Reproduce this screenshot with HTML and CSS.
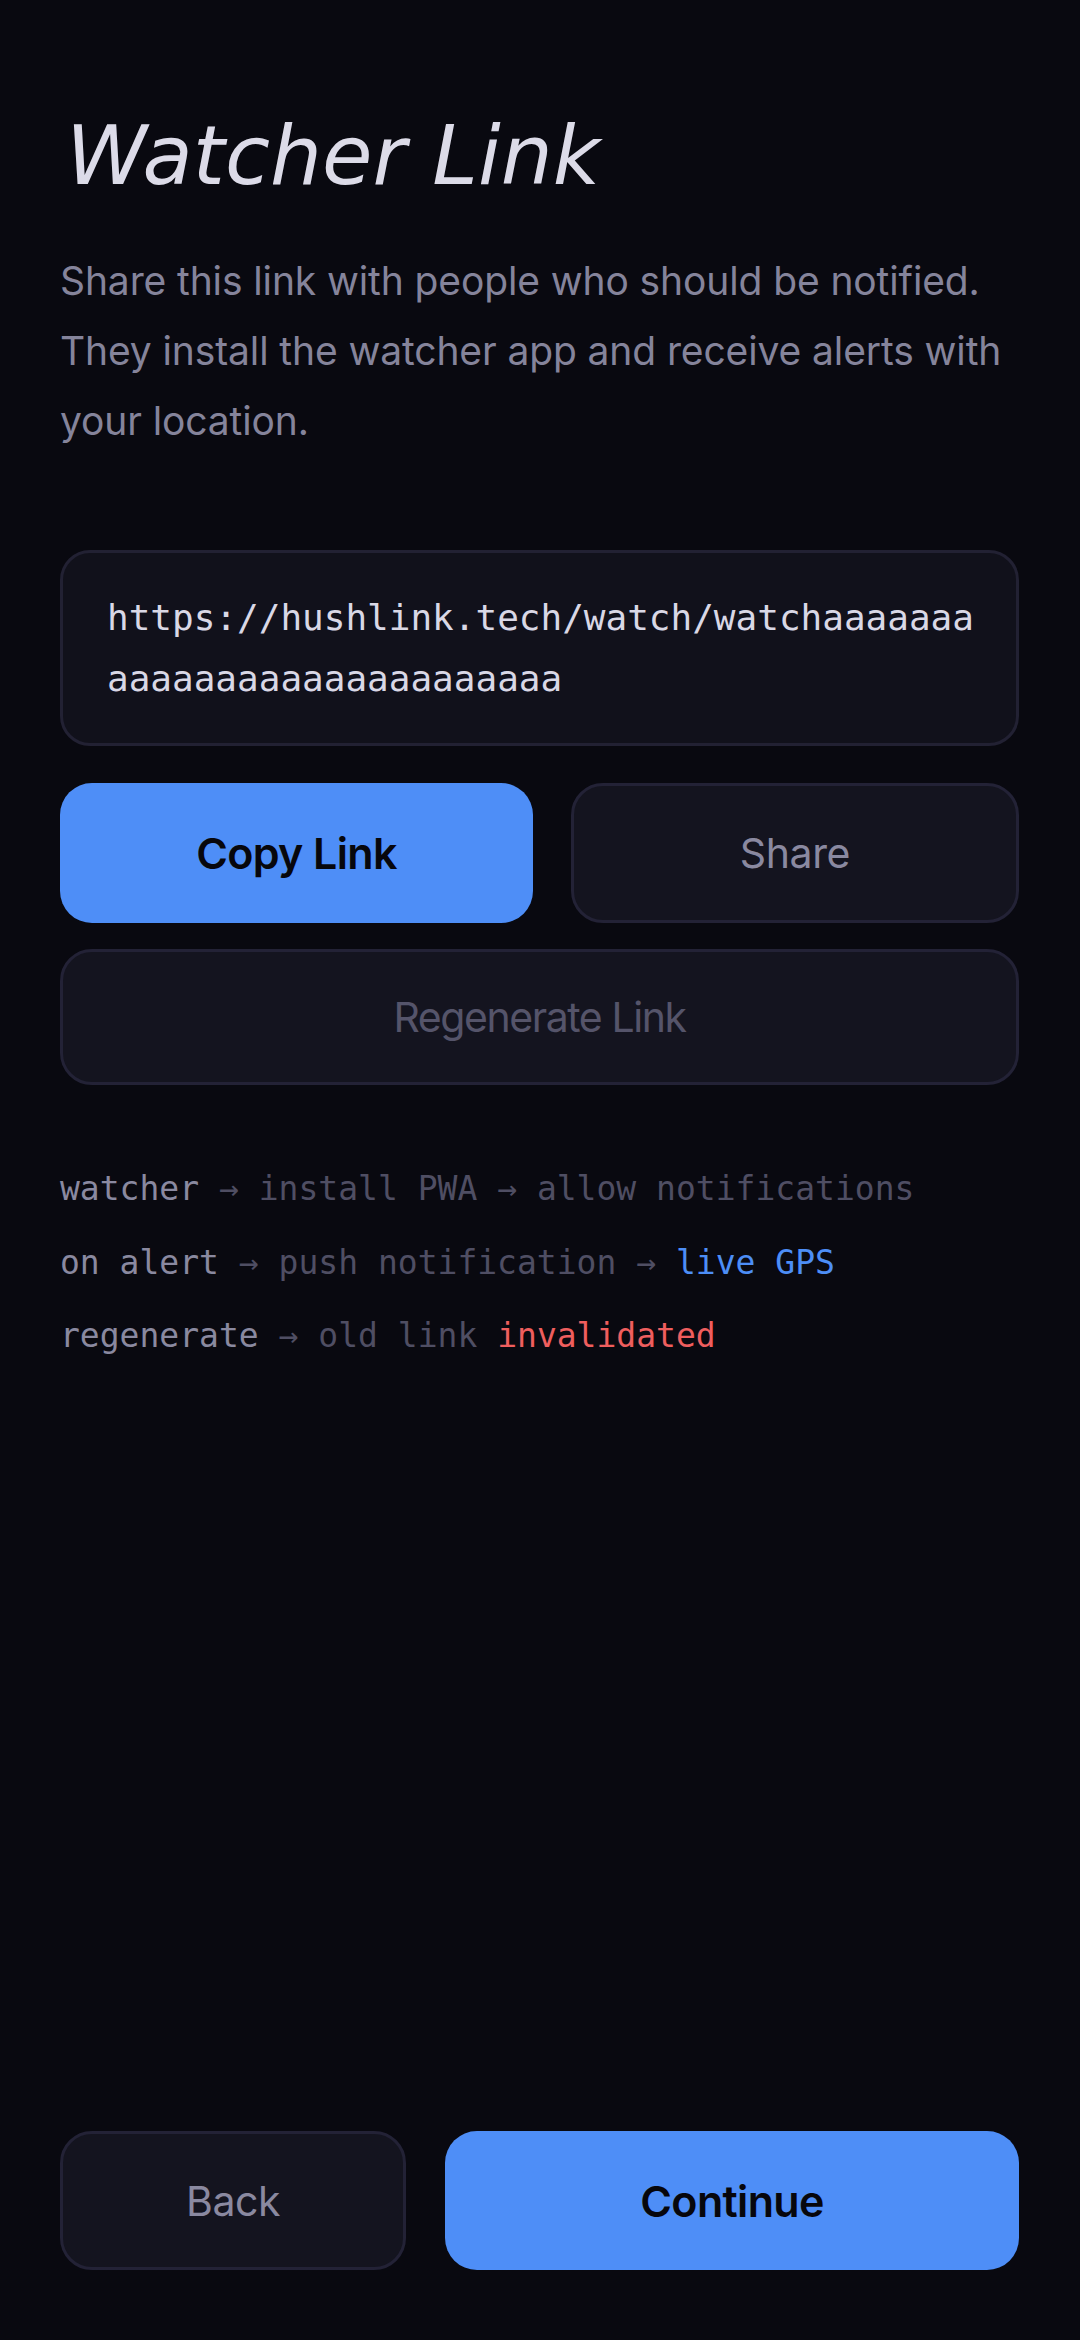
FILE: index.html
```html
<!DOCTYPE html>
<html lang="en">
<head>
<meta charset="utf-8">
<title>Watcher Link</title>
<link rel="stylesheet" href="styles.css">
</head>
<body>
<main class="screen">
  <h1 class="title">Watcher Link</h1>
  <p class="desc">Share this link with people who should be notified. They install the watcher app and receive alerts with your location.</p>

  <div class="linkbox">https://hushlink.tech/watch/watchaaaaaaaaaaaaaaaaaaaaaaaaaaaa</div>

  <div class="actions">
    <button class="btn btn-primary btn-copy">Copy Link</button>
    <button class="btn btn-secondary btn-share">Share</button>
  </div>
  <button class="btn btn-secondary btn-regen">Regenerate Link</button>

  <div class="flow">
    <div class="flow-line"><span class="k">watcher</span> <span class="arr">→</span> <span class="d">install PWA</span> <span class="arr">→</span> <span class="d">allow notifications</span></div>
    <div class="flow-line"><span class="k">on alert</span> <span class="arr">→</span> <span class="d">push notification</span> <span class="arr">→</span> <span class="blue">live GPS</span></div>
    <div class="flow-line"><span class="k">regenerate</span> <span class="arr">→</span> <span class="d">old link</span> <span class="red">invalidated</span></div>
  </div>

  <div class="spacer"></div>

  <div class="footer">
    <button class="btn btn-secondary btn-back">Back</button>
    <button class="btn btn-primary btn-continue">Continue</button>
  </div>
</main>
</body>
</html>
```

FILE: styles.css
```css
* { box-sizing: border-box; }
html, body {
  margin: 0;
  padding: 0;
  background: #090910;
}
body {
  font-family: "Inter", "Noto Sans", sans-serif;
  color: #8a89a0;
}
.screen {
  width: 1080px;
  height: 2340px;
  display: flex;
  flex-direction: column;
  padding: 0 61px 70px 60px;
}
.title {
  margin: 108px 0 0 6px;
  font-family: "DejaVu Sans", sans-serif;
  font-style: italic;
  font-weight: 200;
  font-size: 82px;
  line-height: 96px;
  letter-spacing: 0;
  color: #dcdbe8;
}
.desc {
  margin: 42px 0 0 0;
  font-size: 39px;
  line-height: 70px;
  font-weight: 400;
  letter-spacing: -0.003em;
  color: #85849b;
}
.linkbox {
  margin-top: 94px;
  background: #11111b;
  border: 3px solid #222133;
  border-radius: 30px;
  padding: 34px 40px 34px 44px;
  font-family: "DejaVu Sans Mono", monospace;
  font-size: 36px;
  line-height: 61px;
  color: #d9d8e6;
  word-break: break-all;
}
.actions {
  display: flex;
  gap: 38px;
  margin-top: 37px;
}
.btn {
  font-family: "Inter", sans-serif;
  border-radius: 32px;
  height: 140px;
  display: flex;
  align-items: center;
  justify-content: center;
  font-size: 41px;
  padding: 0;
  cursor: pointer;
}
.btn-primary {
  background: #4e8ef7;
  border: none;
  color: #07070c;
  font-weight: 600;
  font-size: 43px;
  letter-spacing: -0.015em;
}
.btn-secondary {
  background: #14141f;
  border: 3px solid #232236;
  color: #8a89a0;
  font-weight: 400;
  letter-spacing: -0.01em;
}
.btn-copy { flex: 476 1 0; }
.btn-share { flex: 445 1 0; }
.btn-regen {
  margin-top: 26px;
  height: 136px;
  width: 100%;
  color: #55546a;
  letter-spacing: -0.035em;
}
.flow {
  margin-top: 67px;
  font-family: "DejaVu Sans Mono", monospace;
  font-size: 33px;
  display: flex;
  flex-direction: column;
}
.flow-line {
  line-height: 73.5px;
  white-space: pre;
}
.k { color: #8a89a0; }
.arr { color: #4f4e63; }
.d { color: #4f4e63; }
.blue { color: #4d8ef6; }
.red { color: #ef5e5e; }
.spacer { flex: 1; }
.footer {
  display: flex;
  gap: 39px;
}
.btn-back { flex: 342 1 0; height: 139px; }
.btn-continue { flex: 577 1 0; height: 139px; }
```
